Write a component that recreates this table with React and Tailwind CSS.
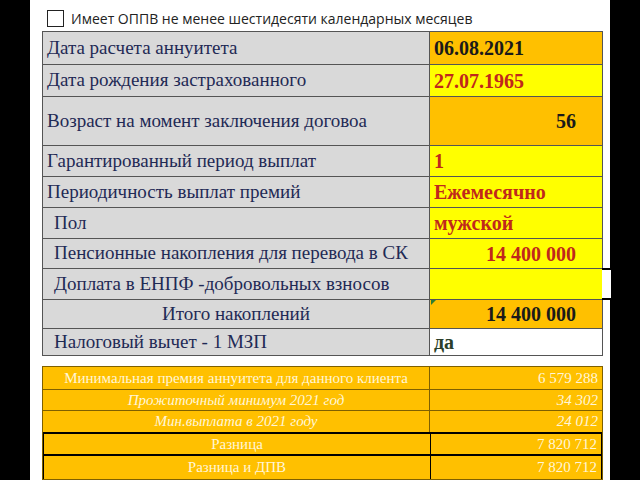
import React from 'react';

const serif = '"Liberation Serif", "Times New Roman", serif';

const rows = [
  { label: 'Дата расчета аннуитета', value: '06.08.2021', h: 'h-[32px]', bg: 'bg-[#ffc000]', color: 'text-[#1a1a1a]', right: false, indent: 'pl-1' },
  { label: 'Дата рождения застрахованного', value: '27.07.1965', h: 'h-[32px]', bg: 'bg-[#ffff00]', color: 'text-[#c0281c]', right: false, indent: 'pl-1' },
  { label: 'Возраст на момент заключения договоа', value: '56', h: 'h-[49px]', bg: 'bg-[#ffc000]', color: 'text-[#1a1a1a]', right: true, indent: 'pl-1' },
  { label: 'Гарантированный период выплат', value: '1', h: 'h-[31px]', bg: 'bg-[#ffff00]', color: 'text-[#c0281c]', right: false, indent: 'pl-1' },
  { label: 'Периодичность выплат премий', value: 'Ежемесячно', h: 'h-[31px]', bg: 'bg-[#ffff00]', color: 'text-[#c0281c]', right: false, indent: 'pl-1' },
  { label: 'Пол', value: 'мужской', h: 'h-[31px]', bg: 'bg-[#ffff00]', color: 'text-[#c0281c]', right: false, indent: 'pl-[11px]' },
  { label: 'Пенсионные накопления для перевода в СК', value: '14 400 000', h: 'h-[30px]', bg: 'bg-[#ffff00]', color: 'text-[#c0281c]', right: true, indent: 'pl-[11px]' },
  { label: 'Доплата в ЕНПФ -добровольных взносов', value: '', h: 'h-[31px]', bg: 'bg-[#ffff00]', color: 'text-[#c0281c]', right: false, indent: 'pl-[11px]', extra: true },
  { label: 'Итого накоплений', value: '14 400 000', h: 'h-[29px]', bg: 'bg-[#ffc000]', color: 'text-[#1a1a1a]', right: true, indent: 'justify-center', flag: true },
  { label: 'Налоговый вычет - 1 МЗП', value: 'да', h: 'h-[27px]', bg: 'bg-white', color: 'text-[#2c3f2a]', right: false, indent: 'pl-[11px]' },
];

const summary = [
  { label: 'Минимальная премия аннуитета для данного клиента', value: '6 579 288', h: 'h-[22px]', italic: false, strong: false },
  { label: 'Прожиточный минимум 2021 год', value: '34 302', h: 'h-[21px]', italic: true, strong: false },
  { label: 'Мин.выплата в 2021 году', value: '24 012', h: 'h-[22px]', italic: true, strong: false },
  { label: 'Разница', value: '7 820 712', h: 'h-[22px]', italic: false, strong: true },
  { label: 'Разница и ДПВ', value: '7 820 712', h: 'h-[25px]', italic: false, strong: true },
];

export default function App() {
  return (
    <div className="flex h-[480px] w-[640px] overflow-hidden bg-black">
      <div className="ml-[30px] h-full w-[580px] bg-white">
        <div className="flex h-[31px] items-center pl-[17px] pt-[5px]">
          <div className="h-[17px] w-[17px] border-[1.5px] border-[#222]" />
          <span
            className="ml-[7px] text-[14px] text-[#222]"
            style={{ fontFamily: '"Open Sans", "Liberation Sans", sans-serif' }}
          >
            Имеет ОППВ не менее шестидесяти календарных месяцев
          </span>
        </div>

        <div className="ml-[12px] w-[561px] border border-[#555]" style={{ fontFamily: serif }}>
          {rows.map((r, i) => (
            <div key={i} className={`relative flex ${r.h} ${i > 0 ? 'border-t border-[#555]' : ''}`}>
              <div
                className={`flex w-[387px] items-center border-r border-[#555] bg-[#d9d9d9] text-[19px] text-[#1f2a55] ${r.indent}`}
                style={{ fontFamily: serif }}
              >
                {r.label}
              </div>
              <div
                className={`flex flex-1 items-center ${r.bg} ${r.color} text-[20px] font-bold ${r.right ? 'justify-end pr-[26px]' : 'pl-1'}`}
                style={{ fontFamily: serif }}
              >
                {r.value}
              </div>
              {r.flag && (
                <div className="absolute left-[388px] top-0 h-0 w-0 border-r-[5px] border-t-[5px] border-r-transparent border-t-[#2e7d32]" />
              )}
              {r.extra && (
                <div className="absolute -right-[9px] -top-[1px] h-[32px] w-[9px] border-y-2 border-black bg-white" />
              )}
            </div>
          ))}
        </div>

        <div
          className="ml-[12px] mt-[10px] w-[561px] border border-[#7f6000] bg-[#ffc000] text-[15px] text-[#fff6d8]"
          style={{ fontFamily: serif }}
        >
          {summary.map((s, i) => (
            <div
              key={i}
              className={`flex ${s.h} ${i > 0 ? (s.strong ? 'border-t-2 border-black' : 'border-t border-[#7f6000]') : ''} ${s.strong ? 'border-x border-black' : ''}`}
            >
              <div className={`flex w-[387px] items-center justify-center border-r ${s.strong ? 'border-black' : 'border-[#7f6000]'} ${s.italic ? 'italic' : ''}`}>
                {s.label}
              </div>
              <div className={`flex flex-1 items-center justify-end pr-[4px] ${s.italic ? 'italic' : ''}`}>
                {s.value}
              </div>
            </div>
          ))}
        </div>
      </div>
    </div>
  );
}
